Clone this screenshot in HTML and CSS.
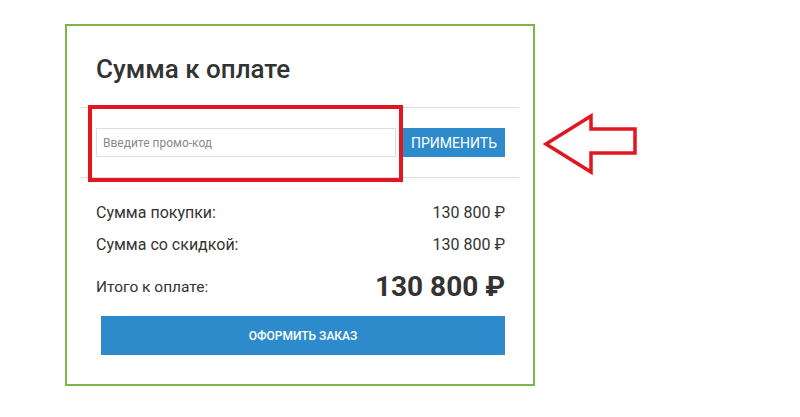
FILE: index.html
```html
<!DOCTYPE html>
<html lang="ru">
<head>
    <meta charset="UTF-8">
    <meta name="viewport" content="width=device-width, initial-scale=1.0">
    <title>Сумма к оплате</title>
    <link rel="stylesheet" href="styles.css">
</head>
<body>
    <div class="page">
        <div class="checkout">
            <h1 class="title">Сумма к оплате</h1>
            <div class="promo">
                <div class="promoRow">
                    <input type="text" class="promoInput" placeholder="Введите промо-код">
                    <button class="promoBtn">ПРИМЕНИТЬ</button>
                </div>
                <div class="highlight"></div>
            </div>
            <div class="totals">
                <div class="row">
                    <span>Сумма покупки:</span>
                    <span>130 800 ₽</span>
                </div>
                <div class="row">
                    <span>Сумма со скидкой:</span>
                    <span>130 800 ₽</span>
                </div>
                <div class="row total">
                    <span>Итого к оплате:</span>
                    <span class="bigSum">130 800 ₽</span>
                </div>
                <button class="orderBtn">ОФОРМИТЬ ЗАКАЗ</button>
            </div>
        </div>
        <svg class="arrow" width="96" height="64" viewBox="0 0 96 64">
            <path d="M3 31 L48 3 L48 16 L92 16 L92 40 L48 40 L48 59 Z" fill="none" stroke="#e3161f" stroke-width="3.5" stroke-linejoin="miter"/>
        </svg>
    </div>
</body>
</html>
```

FILE: styles.css
```css
body {
    margin: 0;
    background: #fff;
    font-family: Roboto, "Liberation Sans", sans-serif;
    color: #333;
}
.page {
    display: flex;
    align-items: flex-start;
    padding: 24px 0 0 65px;
}
.checkout {
    width: 438px;
    border: 2px solid #7ab648;
    padding: 0 14px 29px;
}
.title {
    margin: 0;
    padding: 28px 0 23px 15px;
    font-size: 26px;
    line-height: 30px;
    font-weight: 500;
    color: #333;
}
.promo {
    position: relative;
    border-top: 1px solid #ddd;
    border-bottom: 1px solid #ddd;
    padding: 20px 14px 20px 15px;
}
.promoRow {
    display: flex;
    gap: 7px;
}
.promoInput {
    width: 300px;
    height: 29px;
    box-sizing: border-box;
    border: 1px solid #ddd;
    padding: 0 6px;
    font-family: Roboto, "Liberation Sans", sans-serif;
    font-size: 12px;
    color: #333;
    outline: none;
}
.promoInput::placeholder {
    color: #8a8a8a;
}
.promoBtn {
    width: 102px;
    height: 29px;
    border: none;
    background: #2d8bcb;
    color: #fff;
    font-family: Roboto, "Liberation Sans", sans-serif;
    font-size: 14px;
    padding: 0;
}
.highlight {
    position: absolute;
    left: 7px;
    top: -3px;
    width: 307px;
    height: 69px;
    border: 4px solid #e3161f;
}
.totals {
    padding: 25px 14px 0 15px;
}
.row {
    display: flex;
    justify-content: space-between;
    align-items: center;
    font-size: 16px;
    line-height: 20px;
    margin-bottom: 12px;
}
.row.total {
    margin-top: 16px;
    margin-bottom: 13px;
    font-size: 15.5px;
}
.bigSum {
    font-size: 28px;
    line-height: 32px;
    font-weight: 700;
}
.orderBtn {
    display: block;
    width: 404px;
    height: 39px;
    margin-left: 5px;
    border: none;
    background: #2d8bcb;
    color: #fff;
    font-family: Roboto, "Liberation Sans", sans-serif;
    font-size: 12px;
    font-weight: 500;
    line-height: 14px;
    padding: 13px 0 12px;
    text-align: center;
}
.arrow {
    margin: 89px 0 0 8px;
}
```
